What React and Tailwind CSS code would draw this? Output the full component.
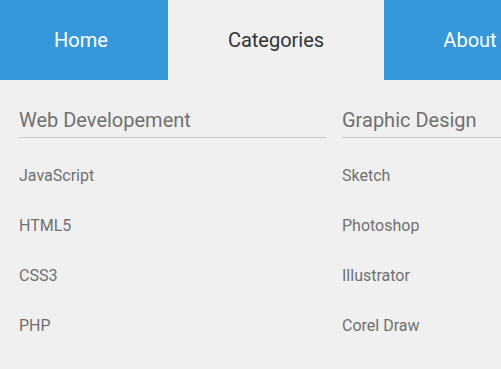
import React from 'react';

const columns = [
    { title: 'Web Developement', items: ['JavaScript', 'HTML5', 'CSS3', 'PHP'] },
    { title: 'Graphic Design', items: ['Sketch', 'Photoshop', 'Illustrator', 'Corel Draw'] },
];

const App = () => {
    return (
        <div className="w-[501px] h-[369px] overflow-hidden bg-[#f0f0f0] font-['Roboto',sans-serif]">
            <nav className="flex h-20">
                <a className="w-[168px] shrink-0 flex items-center justify-center pr-[6px] bg-[#3498db] text-white text-[20px]">Home</a>
                <a className="w-[216px] shrink-0 flex items-center justify-center bg-[#f0f0f0] text-[#333] text-[20px]">Categories</a>
                <a className="w-[168px] shrink-0 flex items-center justify-center pl-[4px] bg-[#3498db] text-white text-[20px]">About</a>
            </nav>

            <div className="flex gap-4 pl-[19px] pt-7">
                {columns.map((col) => (
                    <div key={col.title} className="w-[307px] shrink-0">
                        <h3 className="text-[20px] leading-6 text-[#707070] pb-[5px] border-b border-[#c8c8c8]">{col.title}</h3>
                        <ul className="mt-[13px]">
                            {col.items.map((item) => (
                                <li key={item} className="h-[50px] flex items-center text-[16px] text-[#707070]">{item}</li>
                            ))}
                        </ul>
                    </div>
                ))}
            </div>
        </div>
    );
};

export default App;
